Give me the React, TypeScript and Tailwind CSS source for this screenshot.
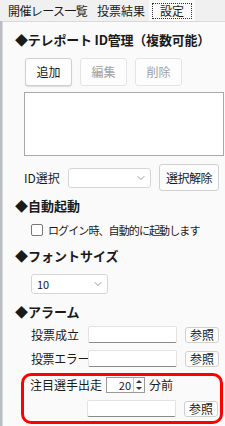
import { ChevronDown } from 'lucide-react';

function Btn({ label, disabled, className }: { label: string; disabled?: boolean; className: string }) {
  return (
    <div
      className={`flex shrink-0 items-center justify-center whitespace-nowrap rounded-[3px] border border-[#d0d0d0] bg-[#fdfdfd] text-[12px] leading-none ${
        disabled ? 'text-[#a0a0a0]' : 'text-[#1a1a1a]'
      } ${className}`}
    >
      {label}
    </div>
  );
}

function Field({ className }: { className: string }) {
  return <div className={`shrink-0 rounded-[2px] border border-[#e2e2e2] border-b-[#8a8a8a] bg-white ${className}`} />;
}

export default function App() {
  return (
    <div className="relative h-[426px] w-[225px] overflow-hidden bg-[#f0f0f0] font-['Noto_Sans_CJK_JP','Liberation_Sans',sans-serif] text-[#1a1a1a]">
      {/* タブ */}
      <div className="flex h-[21px] items-stretch whitespace-nowrap pl-[3px] text-[12px] leading-none">
        <div className="flex w-[88px] items-center pl-[5px] tracking-[-0.6px]">開催レース一覧</div>
        <div className="flex w-[58px] items-center pl-[6px]">投票結果</div>
        <div className="flex w-[46px] items-center justify-center bg-[#fafafa]">
          <div className="flex h-[16px] w-[40px] items-center justify-center border border-dotted border-[#333]">設定</div>
        </div>
      </div>

      <div className="flex h-[405px]">
        <div className="w-[2px] bg-[#b8bcc4]" />
        <div className="flex flex-1 flex-col whitespace-nowrap border-l border-t border-[#d9d9d9] bg-[#fafafa] pl-[12px]">
          <div className="mt-[9px] text-[13px] font-bold leading-[18px] tracking-[-0.2px]">◆テレポート ID管理（複数可能）</div>

          <div className="ml-[10px] mt-[9px] flex gap-[8px]">
            <Btn label="追加" className="h-[28px] w-[47px] shadow-[0_1px_1px_rgba(0,0,0,0.12)]" />
            <Btn label="編集" disabled className="h-[28px] w-[47px] bg-[#f8f8f8] border-[#e4e4e4]" />
            <Btn label="削除" disabled className="h-[28px] w-[47px] bg-[#f8f8f8] border-[#e4e4e4]" />
          </div>

          <div className="ml-[9px] mt-[6px] h-[64px] w-[200px] shrink-0 border border-[#a9a9a9] bg-white" />

          <div className="ml-[9px] mt-[8px] flex items-center">
            <span className="w-[44px] shrink-0 text-[12px] leading-none">ID選択</span>
            <div className="flex h-[20px] w-[83px] shrink-0 items-center justify-end rounded-[3px] border border-[#d6d6d6] bg-white pr-[3px]">
              <ChevronDown className="h-[12px] w-[12px] text-[#777]" strokeWidth={1.5} />
            </div>
            <Btn label="選択解除" className="ml-[8px] h-[27px] w-[60px] tracking-[-0.5px]" />
          </div>

          <div className="mt-[7px] text-[13px] font-bold leading-[16px]">◆自動起動</div>

          <div className="ml-[16px] mt-[10px] flex items-center">
            <div className="h-[12px] w-[12px] shrink-0 rounded-[2px] border border-[#777] bg-white" />
            <span className="ml-[5px] text-[11px] leading-none tracking-[-0.9px]">ログイン時、自動的に起動します</span>
          </div>

          <div className="mt-[12px] text-[13px] font-bold leading-[16px]">◆フォントサイズ</div>

          <div className="ml-[16px] mt-[10px] flex h-[20px] w-[77px] items-center justify-between rounded-[3px] border border-[#d6d6d6] bg-white pl-[5px] pr-[3px] text-[11px] leading-none">
            <span>10</span>
            <ChevronDown className="h-[12px] w-[12px] text-[#777]" strokeWidth={1.5} />
          </div>

          <div className="mt-[10px] text-[13px] font-bold leading-[16px]">◆アラーム</div>

          <div className="ml-[16px] mt-[6px] flex items-center">
            <span className="w-[57px] shrink-0 text-[12px] leading-none">投票成立</span>
            <Field className="h-[17px] w-[89px]" />
            <Btn label="参照" className="ml-[8px] h-[16px] w-[34px]" />
          </div>

          <div className="ml-[16px] mt-[7px] flex items-center">
            <span className="w-[57px] shrink-0 text-[12px] leading-none tracking-[-0.4px]">投票エラー</span>
            <Field className="h-[17px] w-[89px]" />
            <Btn label="参照" className="ml-[8px] h-[16px] w-[34px]" />
          </div>

          <div className="ml-[6px] mt-[6px] flex h-[51px] w-[202px] shrink-0 flex-col rounded-[10px] border-[3px] border-[#ff0000] pl-[6px] pt-[1px]">
            <div className="flex items-center">
              <span className="w-[76px] shrink-0 text-[12px] leading-none">注目選手出走</span>
              <div className="flex h-[16px] w-[39px] shrink-0 items-center justify-end border border-[#9a9a9a] bg-white text-[11px] leading-none">
                <span className="pr-[2px]">20</span>
                <div className="flex h-full w-[11px] flex-col border-l border-[#c8c8c8]">
                  <div className="flex flex-1 items-center justify-center">
                    <div className="h-0 w-0 border-x-[3px] border-b-[3px] border-x-transparent border-b-[#333]" />
                  </div>
                  <div className="flex flex-1 items-center justify-center">
                    <div className="h-0 w-0 border-x-[3px] border-t-[3px] border-x-transparent border-t-[#333]" />
                  </div>
                </div>
              </div>
              <span className="ml-[4px] text-[12px] leading-none">分前</span>
            </div>
            <div className="ml-[57px] mt-[7px] flex items-center">
              <Field className="h-[17px] w-[89px]" />
              <Btn label="参照" className="ml-[8px] h-[16px] w-[34px]" />
            </div>
          </div>
        </div>
      </div>
    </div>
  );
}
